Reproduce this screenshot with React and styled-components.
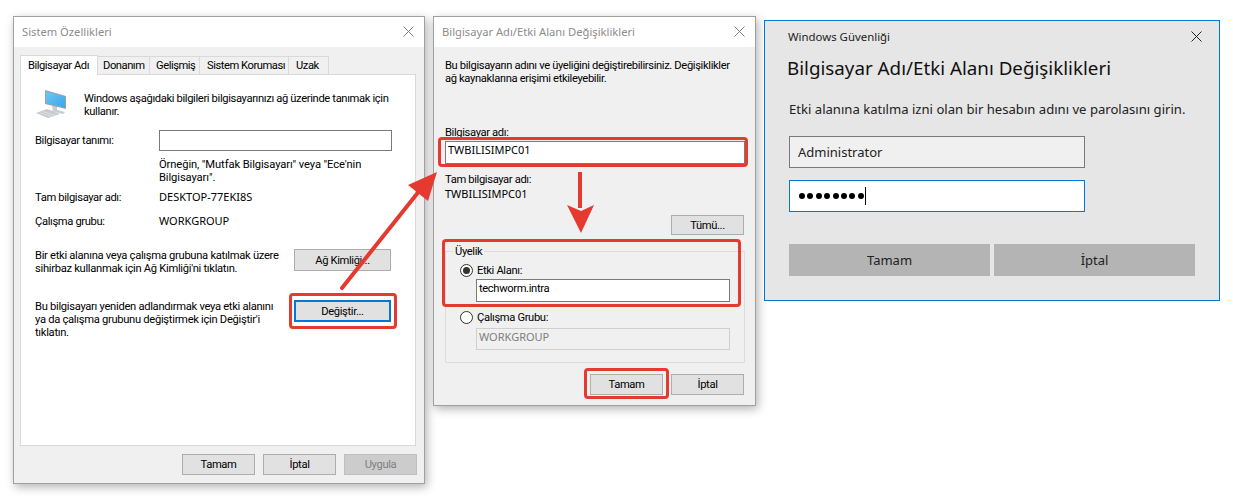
import React from "react";
import styled, { createGlobalStyle } from "styled-components";

const Global = createGlobalStyle`
  html, body { margin: 0; padding: 0; background: #fff; }
  body { font-family: "Roboto", "Noto Sans", sans-serif; font-size: 11.2px; line-height: 13px; letter-spacing: -0.36px; color: #000; }
  * { box-sizing: border-box; }
`;

const Page = styled.div`
  position: relative;
  width: 1233px;
  height: 496px;
  overflow: hidden;
  display: flex;
  align-items: flex-start;
  gap: 8px;
  padding: 16px 0 0 13px;
`;

const Win = styled.section`
  width: ${(p) => p.$w}px;
  height: ${(p) => p.$h}px;
  background: #f0f0f0;
  border: 1px solid #a0a0a0;
  box-shadow: 2px 3px 9px rgba(0, 0, 0, 0.3);
  flex: none;
`;

const TitleBar = styled.header`
  height: 30px;
  background: #fff;
  display: flex;
  align-items: center;
  justify-content: space-between;
  padding: 0 10px 2px 8px;
  color: #8c8c8c;
  font-family: "Noto Sans", sans-serif;
  font-size: 11.2px;
  letter-spacing: 0;
`;

const CloseIcon = ({ color = "#7f7f7f" }) => (
  <svg width="11" height="11" viewBox="0 0 11 11">
    <path d="M.5.5l10 10M10.5.5l-10 10" stroke={color} strokeWidth="1" fill="none" />
  </svg>
);

const TabStrip = styled.nav`
  display: flex;
  align-items: flex-end;
  height: 20px;
  margin: 7px 0 0 6px;
`;

const Tab = styled.div`
  width: ${(p) => p.$w}px;
  height: ${(p) => (p.$active ? 20 : 18)}px;
  background: ${(p) => (p.$active ? "#fff" : "#f0f0f0")};
  border: 1px solid #d9d9d9;
  border-bottom: none;
  border-left: ${(p) => (p.$active ? "1px solid #d9d9d9" : "none")};
  display: flex;
  align-items: center;
  padding-left: ${(p) => p.$pad}px;
  white-space: nowrap;
  letter-spacing: -0.46px;
  position: relative;
  z-index: ${(p) => (p.$active ? 1 : 0)};
  margin-bottom: ${(p) => (p.$active ? "-1px" : "0")};
`;

const Panel = styled.div`
  width: 396px;
  height: 372px;
  margin-left: 6px;
  background: #fff;
  border: 1px solid #d9d9d9;
  padding: 14px 0 0 14px;
`;

const Intro = styled.div`
  display: flex;
  height: 29px;
`;

const IntroIcon = styled.svg`
  width: 32px;
  height: 30px;
  flex: none;
`;

const IntroText = styled.p`
  margin: 3px 0 0 17px;
  white-space: nowrap;
`;

const FieldRow = styled.div`
  display: grid;
  grid-template-columns: 124px 233px;
  align-items: center;
  margin-top: ${(p) => p.$mt}px;
`;

const Note = styled.p`
  margin: 7px 0 0 124px;
  white-space: nowrap;
  letter-spacing: -0.1px;
`;

const Caps = styled.span`
  display: block;
  margin: -1px 0 1px;
  font-family: "Noto Sans", sans-serif;
  font-size: 11px;
  letter-spacing: 0;
`;

const TextInput = styled.div`
  height: ${(p) => p.$h}px;
  width: ${(p) => p.$w || "100%"};
  margin-left: ${(p) => p.$ml || 0}px;
  margin-top: ${(p) => p.$mt || 0}px;
  background: ${(p) => (p.$disabled ? "#f0f0f0" : "#fff")};
  border: 1px solid ${(p) => (p.$disabled ? "#d0d0d0" : "#7a7a7a")};
  color: ${(p) => (p.$disabled ? "#7d7d7d" : "#000")};
  padding: 2px 0 0 2px;
`;

const ActionRow = styled.div`
  display: flex;
  justify-content: space-between;
  width: 356px;
  margin-top: ${(p) => p.$mt}px;
`;

const ActionText = styled.p`
  margin: 0;
  white-space: nowrap;
  letter-spacing: -0.3px;
`;

const Button = styled.button`
  font: inherit;
  letter-spacing: -0.36px;
  color: ${(p) => (p.$disabled ? "#7f7f7f" : "#000")};
  width: ${(p) => p.$w || 73}px;
  height: ${(p) => p.$h || 21}px;
  flex: none;
  padding: 0;
  background: ${(p) => (p.$disabled ? "#cccccc" : "#e1e1e1")};
  border: ${(p) => (p.$focus ? "2px solid #0078d7" : p.$disabled ? "1px solid #bfbfbf" : "1px solid #adadad")};
`;

const Footer = styled.footer`
  display: flex;
  justify-content: flex-end;
  gap: 8px;
  margin-top: ${(p) => p.$mt}px;
  padding-right: ${(p) => p.$pr}px;
`;

const Body2 = styled.div`
  padding: 12px 10px 0 11px;
`;

const Line = styled.p`
  margin: ${(p) => p.$mt || 0}px 0 0;
  white-space: nowrap;
`;

const Group = styled.div`
  position: relative;
  height: 112px;
  margin-top: 16px;
  border: 1px solid #dcdcdc;
  padding: 12px 14px 0 14px;
`;

const Legend = styled.span`
  position: absolute;
  left: 7px;
  top: -7px;
  padding: 0 2px;
  background: #f0f0f0;
`;

const RadioRow = styled.label`
  display: flex;
  align-items: center;
  gap: 4px;
  height: 13px;
  margin-top: ${(p) => p.$mt || 0}px;
`;

const Radio = styled.span`
  width: 13px;
  height: 13px;
  border: 1px solid #333;
  border-radius: 50%;
  background: #fff;
  flex: none;
  display: flex;
  align-items: center;
  justify-content: center;
  &::after {
    content: "";
    width: 7px;
    height: 7px;
    border-radius: 50%;
    background: ${(p) => (p.$on ? "#333" : "transparent")};
  }
`;

const SecWin = styled.section`
  width: 456px;
  height: 281px;
  margin-top: 4px;
  flex: none;
  background: #e6e6e6;
  border: 1px solid #0078d7;
  padding: 0 24px 0 23px;
  font-family: "Noto Sans", sans-serif;
  font-size: 11.4px;
  letter-spacing: 0;
`;

const SecTop = styled.div`
  display: flex;
  justify-content: space-between;
  align-items: center;
  height: 31px;
  margin-right: -7px;
  color: #222;
`;

const SecTitle = styled.h1`
  margin: 4px 0 0 -1px;
  font-weight: 400;
  font-size: 18.8px;
  line-height: 24px;
  color: #111;
`;

const SecText = styled.p`
  margin: 20px 0 0 0;
  padding-left: 1px;
  font-size: 13.1px;
  line-height: 18px;
  white-space: nowrap;
  color: #222;
`;

const SecInput = styled.div`
  width: 296px;
  height: 32px;
  margin: ${(p) => p.$mt}px 0 0 1px;
  background: ${(p) => (p.$focus ? "#fff" : "#f0f0f0")};
  border: 1px solid ${(p) => (p.$focus ? "#0078d7" : "#7a7a7a")};
  display: flex;
  align-items: center;
  padding-left: 8px;
  font-size: 13px;
  color: #222;
`;

const Dots = styled.span`
  display: flex;
  gap: 2.4px;
  margin-left: 1px;
  & > i {
    width: 6px;
    height: 6px;
    border-radius: 50%;
    background: #000;
  }
`;

const Caret = styled.span`
  width: 1px;
  height: 18px;
  margin-left: 1px;
  background: #000;
`;

const SecButtons = styled.div`
  display: flex;
  gap: 4px;
  margin: 32px 0 0 1px;
`;

const SecButton = styled.button`
  width: 201px;
  height: 32px;
  padding: 0;
  border: none;
  background: #b4b4b4;
  font: inherit;
  font-size: 13px;
  color: #222;
`;

const Mark = styled.div`
  position: absolute;
  left: ${(p) => p.$x}px;
  top: ${(p) => p.$y}px;
  width: ${(p) => p.$w}px;
  height: ${(p) => p.$h}px;
  border: 3px solid #e53a30;
  border-radius: 4px;
  pointer-events: none;
`;

const Overlay = styled.svg`
  position: absolute;
  left: 0;
  top: 0;
  pointer-events: none;
`;

const ComputerIcon = () => (
  <IntroIcon viewBox="0 0 32 30">
    <defs>
      <linearGradient id="scr" x1="0" y1="0" x2="1" y2="1">
        <stop offset="0" stopColor="#6cc8f6" />
        <stop offset="1" stopColor="#3aa6e8" />
      </linearGradient>
    </defs>
    <path d="M17 17 h5 v4 l8 2 -2 2 -12 -3 2 -1z" fill="#c8ccd0" />
    <path d="M10 1 L31 7 V20 L10 15 Z" fill="#98a4ad" />
    <path d="M11 2.4 L30 7.8 V18.8 L11 14 Z" fill="url(#scr)" />
    <path d="M1 24 L12 20 L25 25 L13 29 Z" fill="#c6cacd" />
    <path d="M5 23.8 L17 27.6 M8 22.6 L20 26.4" stroke="#e8eaec" strokeWidth=".7" />
  </IntroIcon>
);

export default function App() {
  return (
    <Page>
      <Global />
      <Win $w={412} $h={468}>
        <TitleBar>
          <span>Sistem Özellikleri</span>
          <CloseIcon />
        </TitleBar>
        <TabStrip>
          <Tab $active $w={78} $pad={7}>Bilgisayar Adı</Tab>
          <Tab $w={52} $pad={5}>Donanım</Tab>
          <Tab $w={50} $pad={6}>Gelişmiş</Tab>
          <Tab $w={89} $pad={7}>Sistem Koruması</Tab>
          <Tab $w={40} $pad={7}>Uzak</Tab>
        </TabStrip>
        <Panel>
          <Intro>
            <ComputerIcon />
            <IntroText>Windows aşağıdaki bilgileri bilgisayarınızı ağ üzerinde tanımak için<br />kullanır.</IntroText>
          </Intro>
          <FieldRow $mt={12}>
            <span>Bilgisayar tanımı:</span>
            <TextInput $h={21} />
          </FieldRow>
          <Note>Örneğin, "Mutfak Bilgisayarı" veya "Ece'nin<br />Bilgisayarı".</Note>
          <FieldRow $mt={7}>
            <span>Tam bilgisayar adı:</span>
            <Caps>DESKTOP-77EKI8S</Caps>
          </FieldRow>
          <FieldRow $mt={11}>
            <span>Çalışma grubu:</span>
            <Caps>WORKGROUP</Caps>
          </FieldRow>
          <ActionRow $mt={21}>
            <ActionText>Bir etki alanına veya çalışma grubuna katılmak üzere<br />sihirbaz kullanmak için Ağ Kimliği'ni tıklatın.</ActionText>
            <Button $w={97} $h={22}>Ağ Kimliği...</Button>
          </ActionRow>
          <ActionRow $mt={25}>
            <ActionText>Bu bilgisayarı yeniden adlandırmak veya etki alanını<br />ya da çalışma grubunu değiştirmek için Değiştir'i<br />tıklatın.</ActionText>
            <Button $w={97} $h={22} $focus>Değiştir...</Button>
          </ActionRow>
        </Panel>
        <Footer $mt={8} $pr={7}>
          <Button>Tamam</Button>
          <Button>İptal</Button>
          <Button $disabled>Uygula</Button>
        </Footer>
      </Win>

      <Win $w={323} $h={390}>
        <TitleBar>
          <span>Bilgisayar Adı/Etki Alanı Değişiklikleri</span>
          <CloseIcon />
        </TitleBar>
        <Body2>
          <Line>Bu bilgisayarın adını ve üyeliğini değiştirebilirsiniz. Değişiklikler<br />ağ kaynaklarına erişimi etkileyebilir.</Line>
          <Line $mt={41}>Bilgisayar adı:</Line>
          <TextInput $h={23} $mt={2}><Caps>TWBILISIMPC01</Caps></TextInput>
          <Line $mt={9}>Tam bilgisayar adı:</Line>
          <Line $mt={2}><Caps>TWBILISIMPC01</Caps></Line>
          <Footer $mt={15} $pr={1}>
            <Button $h={20}>Tümü...</Button>
          </Footer>
          <Group>
            <Legend>Üyelik</Legend>
            <RadioRow><Radio $on />Etki Alanı:</RadioRow>
            <TextInput $h={23} $w="254px" $ml={16} $mt={2}>techworm.intra</TextInput>
            <RadioRow $mt={9}><Radio />Çalışma Grubu:</RadioRow>
            <TextInput $h={22} $w="254px" $ml={16} $mt={4} $disabled><Caps>WORKGROUP</Caps></TextInput>
          </Group>
          <Footer $mt={11} $pr={1}>
            <Button>Tamam</Button>
            <Button>İptal</Button>
          </Footer>
        </Body2>
      </Win>

      <SecWin>
        <SecTop>
          <span>Windows Güvenliği</span>
          <CloseIcon color="#222" />
        </SecTop>
        <SecTitle>Bilgisayar Adı/Etki Alanı Değişiklikleri</SecTitle>
        <SecText>Etki alanına katılma izni olan bir hesabın adını ve parolasını girin.</SecText>
        <SecInput $mt={18}>Administrator</SecInput>
        <SecInput $mt={12} $focus>
          <Dots>{Array.from({ length: 8 }, (_, i) => <i key={i} />)}</Dots>
          <Caret />
        </SecInput>
        <SecButtons>
          <SecButton>Tamam</SecButton>
          <SecButton>İptal</SecButton>
        </SecButtons>
      </SecWin>

      <Mark $x={289} $y={293} $w={108} $h={36} />
      <Mark $x={438} $y={137} $w={310} $h={30} />
      <Mark $x={442} $y={239} $w={299} $h={68} />
      <Mark $x={584} $y={368} $w={85} $h={31} />
      <Overlay width="1233" height="496" viewBox="0 0 1233 496">
        <path d="M342 288 L420 190" stroke="#e53a30" strokeWidth="4" strokeLinecap="round" />
        <path d="M437 172 L408 185 L428 201 Z" fill="#e53a30" />
        <path d="M580 172 V208" stroke="#e53a30" strokeWidth="4" />
        <path d="M581 233 L567 205 L581 211 L594 205 Z" fill="#e53a30" />
      </Overlay>
    </Page>
  );
}
